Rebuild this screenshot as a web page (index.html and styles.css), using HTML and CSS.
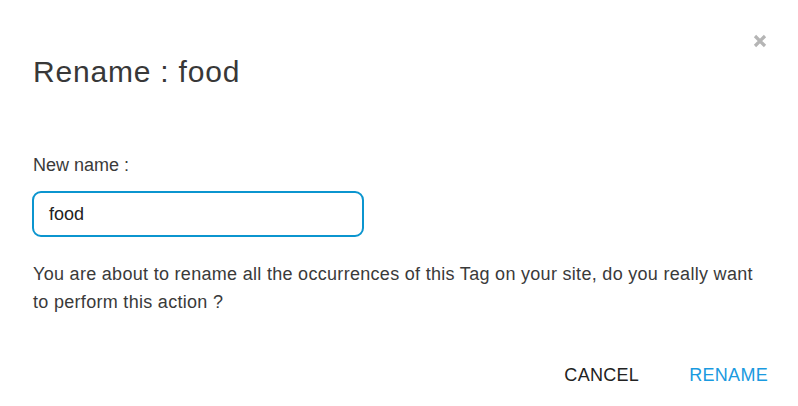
FILE: index.html
```html
<!DOCTYPE html>
<html>
<head>
<meta charset="utf-8">
<link rel="stylesheet" href="styles.css">
</head>
<body>
<div class="dialog">
  <button class="close" aria-label="Close">
    <svg width="14" height="14" viewBox="0 0 14 14"><path d="M2 2L12 12M12 2L2 12" stroke="#b5b5b5" stroke-width="3.2" stroke-linecap="butt"/></svg>
  </button>
  <h1 class="title">Rename : food</h1>
  <label class="label" for="name">New name :</label>
  <div class="input">food</div>
  <p class="message">You are about to rename all the occurrences of this Tag on your site, do you really want to perform this action ?</p>
  <div class="actions">
    <button class="btn cancel">CANCEL</button>
    <button class="btn primary">RENAME</button>
  </div>
</div>
</body>
</html>
```

FILE: styles.css
```css
* { box-sizing: border-box; }
html, body { margin: 0; padding: 0; background: #fff; }
body {
  font-family: "Liberation Sans", Arial, sans-serif;
  color: #3a3a3a;
}
.dialog {
  position: relative;
  width: 798px;
  height: 406px;
  padding: 0 30px 0 32px;
  display: flex;
  flex-direction: column;
}
.close {
  position: absolute;
  top: 34px;
  right: 31px;
  width: 14px;
  height: 14px;
  padding: 0;
  border: 0;
  background: none;
  display: flex;
}
.title {
  margin: 54px 0 0 1px;
  font-size: 30px;
  font-weight: normal;
  letter-spacing: 0.8px;
  line-height: 36px;
  color: #383838;
}
.label {
  margin: 65px 0 0 1px;
  font-size: 18px;
  line-height: 20px;
  color: #3a3a3a;
}
.input {
  margin-top: 16px;
  width: 332px;
  height: 46px;
  border: 2px solid #0b95cf;
  border-radius: 9px;
  padding: 0 15px;
  font-size: 18px;
  line-height: 42px;
  color: #222;
}
.message {
  margin: 23px 0 0 1px;
  max-width: 730px;
  font-size: 18px;
  letter-spacing: 0.3px;
  line-height: 28px;
  color: #3a3a3a;
}
.actions {
  margin-top: auto;
  margin-bottom: 21px;
  display: flex;
  justify-content: flex-end;
  gap: 50px;
}
.btn {
  border: 0;
  background: none;
  padding: 0;
  font-family: "Liberation Sans", Arial, sans-serif;
  font-size: 18px;
  letter-spacing: 0.3px;
  line-height: 20px;
}
.cancel { color: #222; }
.primary { color: #1a9ae0; }
```
